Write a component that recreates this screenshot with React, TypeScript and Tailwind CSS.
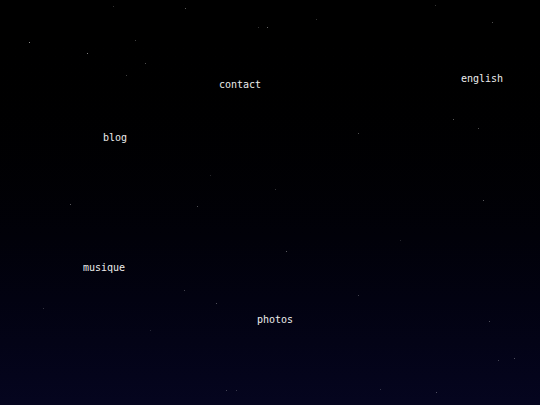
// faint stars scattered over the night sky
const stars = [
  "left-[185px] top-[8px] opacity-35", "left-[267px] top-[27px] opacity-40",
  "left-[29px] top-[42px] opacity-55", "left-[87px] top-[53px] opacity-50",
  "left-[145px] top-[63px] opacity-30", "left-[113px] top-[6px] opacity-20",
  "left-[135px] top-[40px] opacity-25", "left-[258px] top-[27px] opacity-20",
  "left-[316px] top-[19px] opacity-20", "left-[435px] top-[5px] opacity-20",
  "left-[492px] top-[22px] opacity-30", "left-[126px] top-[75px] opacity-25",
  "left-[453px] top-[119px] opacity-35", "left-[478px] top-[128px] opacity-30",
  "left-[358px] top-[133px] opacity-30", "left-[70px] top-[204px] opacity-35",
  "left-[197px] top-[206px] opacity-30", "left-[483px] top-[200px] opacity-35",
  "left-[275px] top-[189px] opacity-20", "left-[286px] top-[251px] opacity-35",
  "left-[184px] top-[290px] opacity-25", "left-[216px] top-[303px] opacity-30",
  "left-[358px] top-[295px] opacity-25", "left-[489px] top-[321px] opacity-30",
  "left-[514px] top-[358px] opacity-30", "left-[43px] top-[308px] opacity-20",
  "left-[226px] top-[390px] opacity-25", "left-[236px] top-[390px] opacity-20",
  "left-[380px] top-[389px] opacity-20", "left-[436px] top-[392px] opacity-30",
  "left-[498px] top-[360px] opacity-25", "left-[210px] top-[175px] opacity-15",
  "left-[400px] top-[240px] opacity-15", "left-[150px] top-[330px] opacity-15",
]

const links = [
  { label: "contact", pos: "left-[219px] top-[79px]" },
  { label: "english", pos: "left-[461px] top-[73px]" },
  { label: "blog", pos: "left-[103px] top-[132px]" },
  { label: "musique", pos: "left-[83px] top-[262px]" },
  { label: "photos", pos: "left-[257px] top-[314px]" },
]

export default function App() {
  return (
    <div className="relative h-[405px] w-[540px] overflow-hidden bg-gradient-to-b from-[#000000] to-[#05051f]">
      {stars.map((s, i) => (
        <span key={i} className={`absolute h-px w-px bg-white ${s}`} />
      ))}
      {links.map((l) => (
        <a
          key={l.label}
          href="#"
          className={`absolute text-[10px] leading-[12px] text-[#ececec] font-['DejaVu_Sans_Mono',monospace] ${l.pos}`}
        >
          {l.label}
        </a>
      ))}
    </div>
  )
}
